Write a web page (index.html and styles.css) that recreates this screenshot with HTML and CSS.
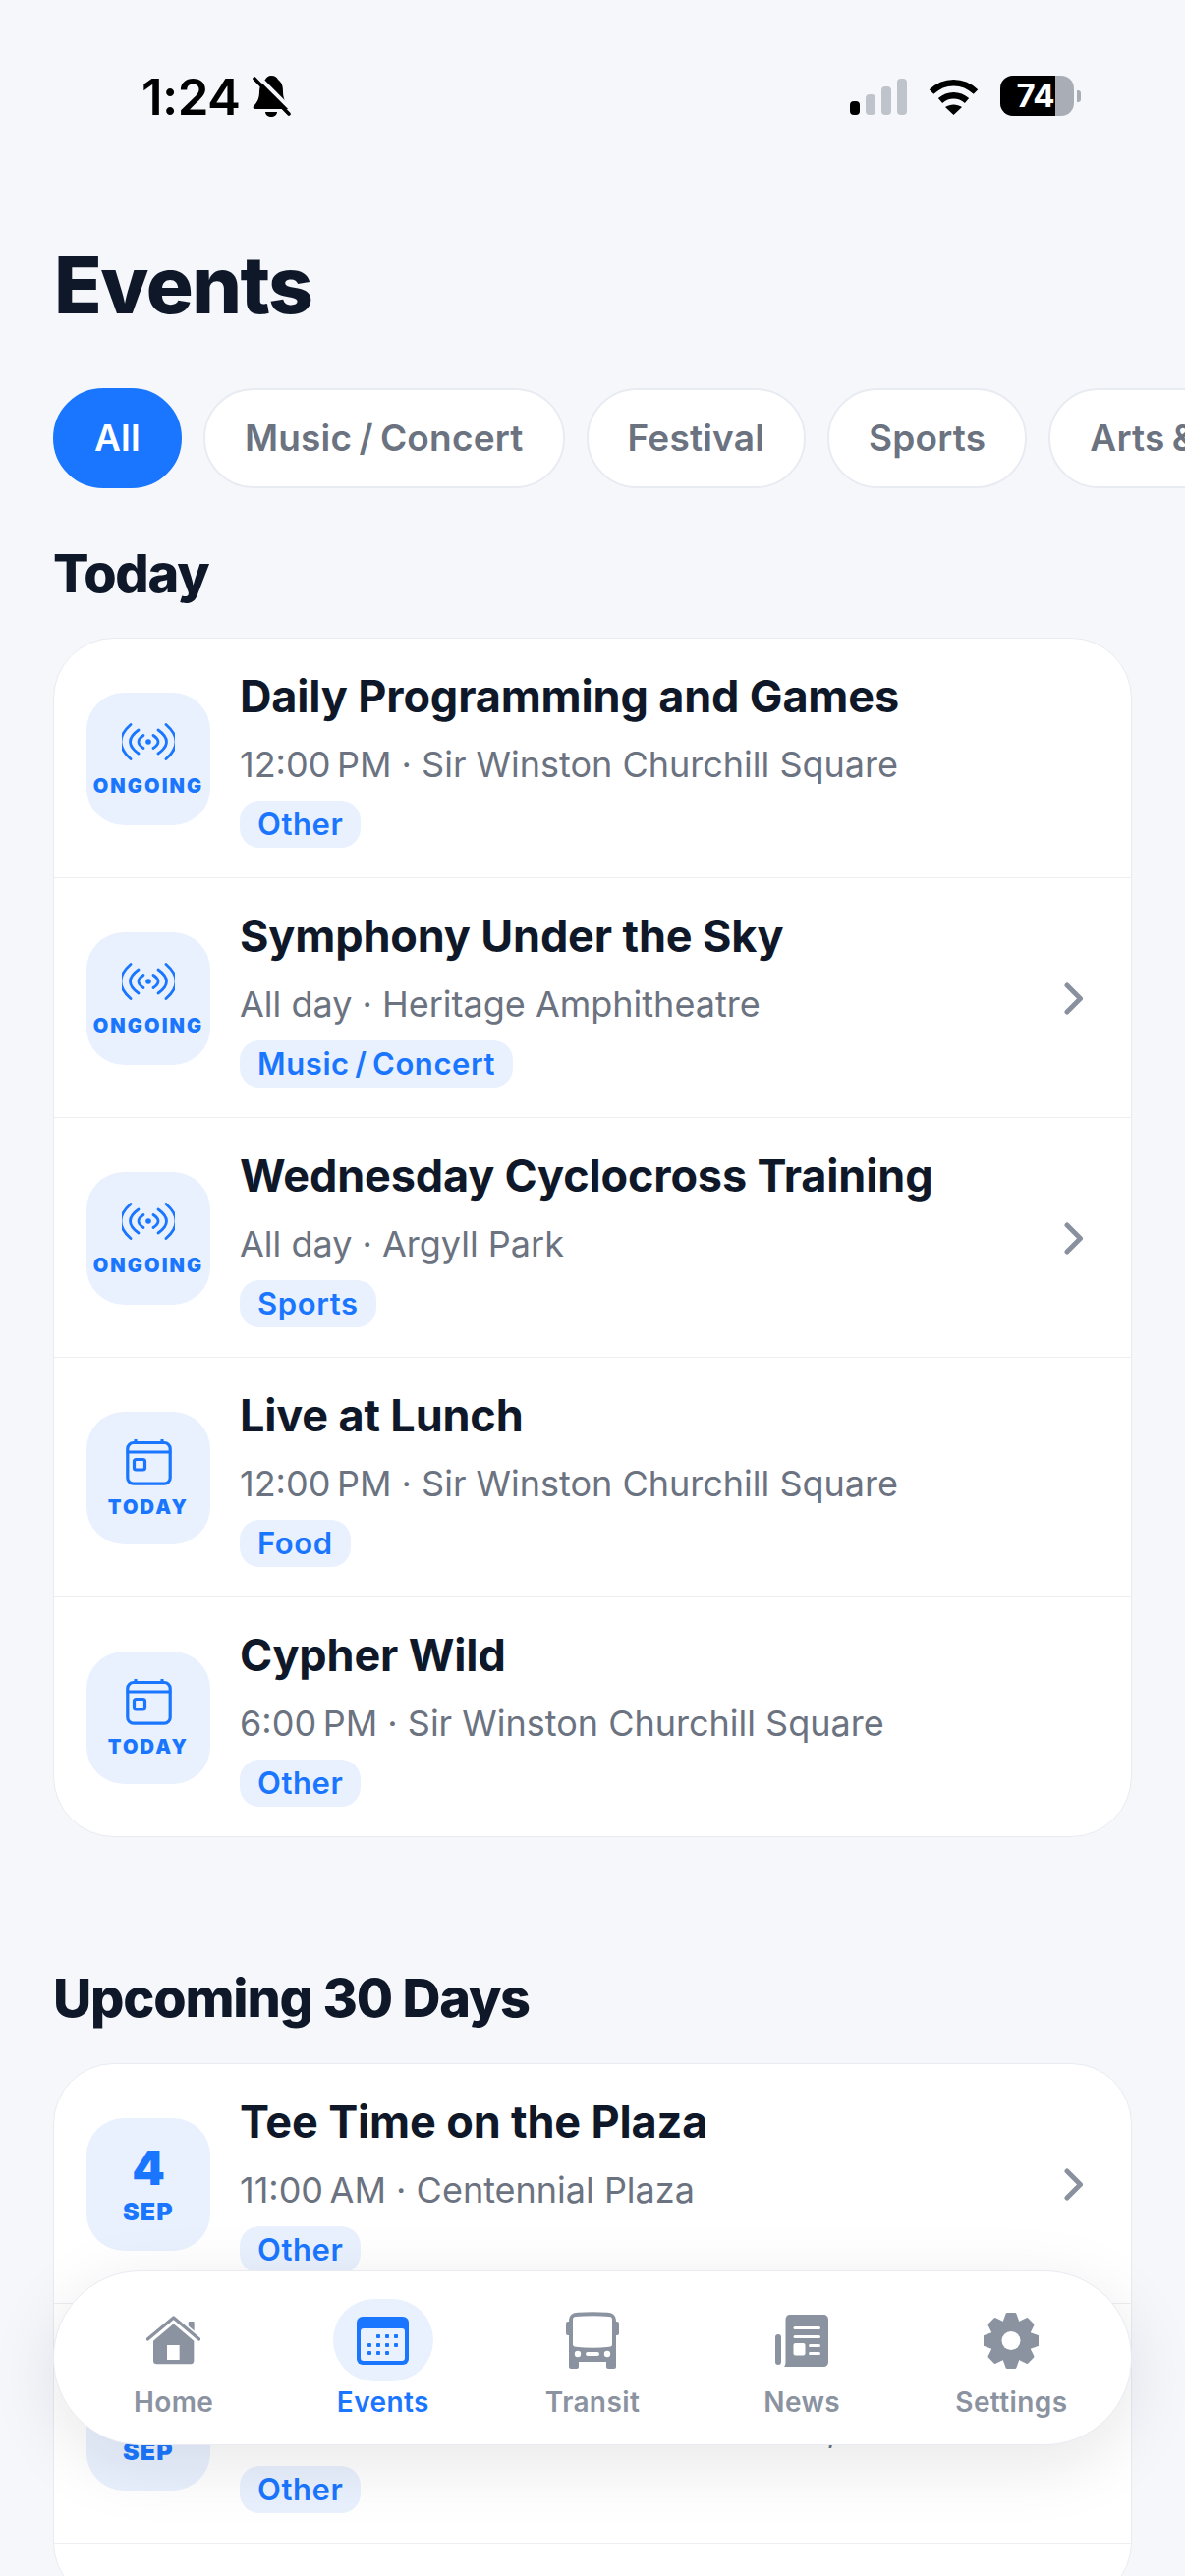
FILE: index.html
```html
<!DOCTYPE html>
<html lang="en">
<head>
    <meta charset="UTF-8">
    <meta name="viewport" content="width=device-width, initial-scale=1.0">
    <title>Events</title>
    <link rel="stylesheet" href="styles.css">
</head>
<body>
    <svg class="defs">
        <defs>
            <g id="ic-live" fill="none" stroke="#1a76ff" stroke-width="2.8" stroke-linecap="round">
                <circle cx="27" cy="19" r="2.8" fill="#1a76ff" stroke="none"/>
                <path d="M22 12.5Q12 19 22 25.5M32 12.5Q42 19 32 25.5"/>
                <path d="M17 7Q0 19 17 31M37 7Q54 19 37 31"/>
                <path d="M9 1.5Q-11 19 9 36.5M45 1.5Q65 19 45 36.5"/>
            </g>
            <g id="ic-cal" fill="none" stroke="#1a76ff" stroke-width="3.2" stroke-linecap="round">
                <rect x="1.8" y="3.5" width="43.4" height="41.7" rx="6"/>
                <path d="M2 13H45M10 1V3M37 1V3"/>
                <rect x="8.5" y="20.5" width="11" height="10.5" rx="2"/>
            </g>
            <path id="ic-chev" d="M3 3L16.500 16.500L3 30" fill="none" stroke="#8a919e" stroke-width="5" stroke-linecap="round" stroke-linejoin="round"/>
            <path id="tooth" d="M-6.500 -20L-4 -27H4L6.500 -20Z" stroke="#8b92a0" stroke-width="3" stroke-linejoin="round" fill="#8b92a0"/>
        </defs>
    </svg>

    <div class="status-bar">
        <div class="status-left">
            <span class="clock">1:24</span>
            <svg class="bell" width="39" height="43" viewBox="0 0 39 43">
                <path d="M19 0C23 0 25 2 26 4C30 7 31 11 31 16C31 23 33 27 37 31C38 33 37 34 35 34H3C1 34 0 33 1 31C5 27 7 23 7 16C7 11 9 7 13 4C14 2 16 0 19 0Z"/>
                <path d="M13 37H25C25 40 22 42 19 42C16 42 13 40 13 37Z"/>
                <path d="M6 1L42 37" stroke="#f5f7fb" stroke-width="4" fill="none"/>
                <path d="M2 3L37 39" stroke="#000" stroke-width="3.600" stroke-linecap="round" fill="none"/>
            </svg>
        </div>
        <div class="status-right">
            <div class="signal">
                <i class="bar on b1"></i><i class="bar b2"></i><i class="bar b3"></i><i class="bar b4"></i>
            </div>
            <svg class="wifi" width="51" height="37" viewBox="0 0 51 37">
                <path d="M3 13.500C16 1 35 1 48 13.500" fill="none" stroke="#000" stroke-width="6.500"/>
                <path d="M12 22.500C20 15.500 31 15.500 39 22.500" fill="none" stroke="#000" stroke-width="6.500"/>
                <path d="M25.500 37L17 29C22 25.500 29 25.500 34 29Z"/>
            </svg>
            <div class="battery">
                <div class="battery-body"><span class="battery-fill">74</span></div>
                <div class="battery-nub"></div>
            </div>
        </div>
    </div>

    <h1>Events</h1>

    <div class="chips">
        <span class="chip active">All</span>
        <span class="chip">Music / Concert</span>
        <span class="chip">Festival</span>
        <span class="chip">Sports</span>
        <span class="chip">Arts &amp; Culture</span>
    </div>

    <h2 class="today-head">Today</h2>
    <div class="card">
        <div class="event">
            <div class="tile">
                <svg class="live-icon" width="54" height="38" viewBox="0 0 54 38"><use href="#ic-live"/></svg>
                <span class="tile-label">ONGOING</span>
            </div>
            <div class="event-text">
                <div class="event-title">Daily Programming and Games</div>
                <div class="event-sub">12:00&#8239;PM · Sir Winston Churchill Square</div>
                <span class="tag">Other</span>
            </div>
        </div>
        <div class="event">
            <div class="tile">
                <svg class="live-icon" width="54" height="38" viewBox="0 0 54 38"><use href="#ic-live"/></svg>
                <span class="tile-label">ONGOING</span>
            </div>
            <div class="event-text">
                <div class="event-title">Symphony Under the Sky</div>
                <div class="event-sub">All day · Heritage Amphitheatre</div>
                <span class="tag">Music / Concert</span>
            </div>
            <svg class="chevron" width="20" height="33" viewBox="0 0 20 33"><use href="#ic-chev"/></svg>
        </div>
        <div class="event">
            <div class="tile">
                <svg class="live-icon" width="54" height="38" viewBox="0 0 54 38"><use href="#ic-live"/></svg>
                <span class="tile-label">ONGOING</span>
            </div>
            <div class="event-text">
                <div class="event-title">Wednesday Cyclocross Training</div>
                <div class="event-sub">All day · Argyll Park</div>
                <span class="tag">Sports</span>
            </div>
            <svg class="chevron" width="20" height="33" viewBox="0 0 20 33"><use href="#ic-chev"/></svg>
        </div>
        <div class="event">
            <div class="tile">
                <svg class="cal-icon" width="47" height="47" viewBox="0 0 47 47"><use href="#ic-cal"/></svg>
                <span class="tile-label">TODAY</span>
            </div>
            <div class="event-text">
                <div class="event-title">Live at Lunch</div>
                <div class="event-sub">12:00&#8239;PM · Sir Winston Churchill Square</div>
                <span class="tag">Food</span>
            </div>
        </div>
        <div class="event">
            <div class="tile">
                <svg class="cal-icon" width="47" height="47" viewBox="0 0 47 47"><use href="#ic-cal"/></svg>
                <span class="tile-label">TODAY</span>
            </div>
            <div class="event-text">
                <div class="event-title">Cypher Wild</div>
                <div class="event-sub">6:00&#8239;PM · Sir Winston Churchill Square</div>
                <span class="tag">Other</span>
            </div>
        </div>
    </div>

    <h2 class="upcoming-head">Upcoming 30 Days</h2>
    <div class="card card-open">
        <div class="event">
            <div class="tile">
                <span class="tile-day">4</span>
                <span class="tile-month">SEP</span>
            </div>
            <div class="event-text">
                <div class="event-title">Tee Time on the Plaza</div>
                <div class="event-sub">11:00&#8239;AM · Centennial Plaza</div>
                <span class="tag">Other</span>
            </div>
            <svg class="chevron" width="20" height="33" viewBox="0 0 20 33"><use href="#ic-chev"/></svg>
        </div>
        <div class="event">
            <div class="tile">
                <span class="tile-day">5</span>
                <span class="tile-month">SEP</span>
            </div>
            <div class="event-text">
                <div class="event-title">Tee Time on the Plaza</div>
                <div class="event-sub">11:00&#8239;AM · Centennial Plaza Garden, Downtown</div>
                <span class="tag">Other</span>
            </div>
        </div>
    </div>

    <nav class="tabbar">
        <div class="tab">
            <div class="tab-icon">
                <svg width="55" height="50" viewBox="0 0 165 150" fill="#8b92a0">
                    <rect x="128" y="18" width="18" height="36" rx="3"/>
                    <path d="M83 25L145 77V138C145 144 141 148 135 148H31C25 148 21 144 21 138V77Z"/>
                    <rect x="63" y="90" width="38" height="45" fill="#fff"/>
                    <path d="M4 72L83 6L161 72" fill="none" stroke="#fff" stroke-width="20"/>
                    <path d="M4 72L83 6L161 72" fill="none" stroke="#8b92a0" stroke-width="10" stroke-linecap="round" stroke-linejoin="round"/>
                </svg>
            </div>
            <span class="tab-label">Home</span>
        </div>
        <div class="tab active">
            <div class="tab-icon">
                <svg width="53" height="49" viewBox="0 0 53 49">
                    <rect width="53" height="49" rx="6" fill="#1a76ff"/>
                    <rect x="4" y="12" width="45" height="33" rx="3" fill="#e9f1fe"/>
                    <g fill="#1a76ff">
                        <rect x="20" y="18" width="4" height="4" rx="1"/><rect x="29" y="18" width="4" height="4" rx="1"/><rect x="38" y="18" width="4" height="4" rx="1"/>
                        <rect x="11" y="27" width="4" height="4" rx="1"/><rect x="20" y="27" width="4" height="4" rx="1"/><rect x="29" y="27" width="4" height="4" rx="1"/><rect x="38" y="27" width="4" height="4" rx="1"/>
                        <rect x="11" y="35" width="4" height="4" rx="1"/><rect x="20" y="35" width="4" height="4" rx="1"/><rect x="29" y="35" width="4" height="4" rx="1"/>
                    </g>
                </svg>
            </div>
            <span class="tab-label">Events</span>
        </div>
        <div class="tab">
            <div class="tab-icon">
                <svg width="54" height="58" viewBox="0 0 54 58" fill="#8b92a0">
                    <path d="M3 10C3 3 7 1 12 .8C22 0 32 0 42 .8C47 1 51 3 51 10V51H41V56C41 57 40 58 39 58H15V58C14 58 13 57 13 56V51H3Z"/>
                    <path d="M3 50H13V56C13 57 12 58 11 58H5C4 58 3 57 3 56Z"/>
                    <path d="M41 50H51V56C51 57 50 58 49 58H43C42 58 41 57 41 56Z"/>
                    <rect x="0" y="10" width="5" height="14" rx="2"/>
                    <rect x="49" y="10" width="5" height="14" rx="2"/>
                    <rect x="13" y="51" width="28" height="7" fill="#fff"/>
                    <path d="M7 8C7 6 8 5 10 5C21 4 33 4 44 5C46 5 47 6 47 8V33C47 35 46 35.500 44 35.800C33 37 21 37 10 35.800C8 35.500 7 35 7 33Z" fill="#fff"/>
                    <circle cx="12" cy="43" r="3.200" fill="#fff"/>
                    <circle cx="42" cy="43" r="3.200" fill="#fff"/>
                    <rect x="20" y="41" width="14" height="4" rx="2" fill="#fff"/>
                </svg>
            </div>
            <span class="tab-label">Transit</span>
        </div>
        <div class="tab">
            <div class="tab-icon">
                <svg width="54" height="53" viewBox="0 0 54 53" fill="#8b92a0">
                    <rect x="0" y="20" width="6" height="31" rx="3"/>
                    <path d="M15 0H49C52 0 54 2 54 5V48C54 51 52 53 49 53H9C10 52 10.500 50 10.500 48V5C10.500 2 12 0 15 0Z"/>
                    <g fill="#fff">
                        <rect x="18.500" y="12" width="27.500" height="3" rx="1.500"/>
                        <rect x="18.500" y="21" width="27.500" height="3" rx="1.500"/>
                        <rect x="18.500" y="29" width="12" height="12.500" rx="2"/>
                        <rect x="34" y="30" width="12" height="3" rx="1.500"/>
                        <rect x="34" y="38" width="12" height="3" rx="1.500"/>
                    </g>
                </svg>
            </div>
            <span class="tab-label">News</span>
        </div>
        <div class="tab">
            <div class="tab-icon">
                <svg width="56" height="57" viewBox="-28 -28.500 56 57">
                    <circle r="21.500" fill="#8b92a0"/>
                    <use href="#tooth"/>
                    <use href="#tooth" transform="rotate(45)"/>
                    <use href="#tooth" transform="rotate(90)"/>
                    <use href="#tooth" transform="rotate(135)"/>
                    <use href="#tooth" transform="rotate(180)"/>
                    <use href="#tooth" transform="rotate(225)"/>
                    <use href="#tooth" transform="rotate(270)"/>
                    <use href="#tooth" transform="rotate(315)"/>
                    <circle r="9.500" fill="#fff"/>
                </svg>
            </div>
            <span class="tab-label">Settings</span>
        </div>
    </nav>
</body>
</html>
```

FILE: styles.css
```css
* { box-sizing: border-box; }
html, body { margin: 0; height: 2622px; overflow: hidden; }
body { position: relative; background: #f5f7fb; font-family: Inter, "Liberation Sans", sans-serif; color: #0f1829; }
.defs { width: 0; height: 0; display: block; }

.status-bar { display: flex; justify-content: space-between; align-items: flex-start; height: 120px; padding: 77px 106px 0 144px; }
.status-left { display: flex; align-items: center; gap: 13px; height: 43px; }
.clock { font-size: 51px; font-weight: 600; letter-spacing: -.6px; line-height: 43px; color: #000; }
.status-right { display: flex; align-items: center; height: 41px; }
.signal { display: flex; align-items: flex-end; gap: 6px; height: 37px; margin-right: 22px; margin-top: 2px; }
.bar { display: block; width: 10px; border-radius: 4px; background: #bfc3cb; }
.bar.on { background: #000; }
.b1 { height: 14px; }
.b2 { height: 21px; }
.b3 { height: 29px; }
.b4 { height: 37px; }
.wifi { margin-right: 22px; margin-top: 2px; }
.battery { display: flex; align-items: center; gap: 3px; }
.battery-body { width: 75px; height: 41px; border-radius: 13px; background: #a9adb5; overflow: hidden; }
.battery-fill { display: block; width: 56px; height: 41px; background: #000; color: #fff; font-size: 33px; font-weight: 700; line-height: 41px; text-align: right; padding-right: 1px; letter-spacing: -.5px; }
.battery-nub { width: 4px; height: 12px; border-radius: 0 3px 3px 0; background: #a9adb5; }

h1 { margin: 122px 0 0 55px; font-size: 80px; line-height: 96px; font-weight: 800; letter-spacing: -1.500px; }

.chips { display: flex; gap: 22px; margin: 57px 0 0 54px; }
.chip { flex-shrink: 0; height: 102px; padding: 0 40px; border: 2px solid #e9ebf2; border-radius: 51px; background: #fff; font-size: 37px; font-weight: 600; line-height: 98px; letter-spacing: .2px; word-spacing: -2.300px; color: #6b7280; white-space: nowrap; }
.chip.active { background: #1a76ff; border-color: #1a76ff; color: #fff; }

h2 { margin: 0 0 0 54px; font-size: 54px; line-height: 64px; font-weight: 800; letter-spacing: -1.200px; }
.today-head { margin-top: 55px; margin-bottom: 33px; }
.upcoming-head { margin-top: 132px; margin-bottom: 34px; }

.card { margin: 0 54px; border: 1px solid #e8ebf1; border-radius: 62px; background: #fff; overflow: hidden; }
.card-open { padding-bottom: 60px; }
.event { display: flex; align-items: center; gap: 30px; padding: 31px 48px 30px 33px; border-bottom: 1px solid #edeef2; }
.card > .event:last-child { border-bottom: 0; }
.card-open > .event:last-child { border-bottom: 1px solid #edeef2; }
.tile { flex-shrink: 0; display: flex; flex-direction: column; align-items: center; justify-content: center; width: 126px; height: 135px; border-radius: 38px; background: #e9f1fe; color: #1a76ff; }
.live-icon { margin-top: 3px; margin-bottom: 7px; }
.cal-icon { margin-top: 2px; margin-bottom: 3px; }
.tile-label { margin-top: 8px; font-size: 20px; line-height: 22px; font-weight: 900; letter-spacing: 2.100px; }
.tile-day { font-size: 48px; line-height: 50px; font-weight: 900; }
.tile-month { margin-top: 5px; font-size: 25px; line-height: 28px; font-weight: 900; letter-spacing: 1.200px; }
.event-text { flex: 1; min-width: 0; display: flex; flex-direction: column; align-items: flex-start; }
.event-title { font-size: 45px; line-height: 56px; font-weight: 650; letter-spacing: -.15px; white-space: nowrap; }
.event-sub { margin-top: 18px; font-size: 36px; line-height: 46px; color: #6b7280; white-space: nowrap; }
.tag { margin-top: 14px; height: 48px; padding: 0 18px; border-radius: 20px; background: #e9f1fe; color: #1a76ff; font-size: 31px; line-height: 48px; font-weight: 600; letter-spacing: .6px; word-spacing: -3px; }
.chevron { flex-shrink: 0; }

.tabbar { position: absolute; left: 54px; right: 54px; bottom: 133px; display: flex; height: 178px; padding: 0 15px; border: 1px solid #e8ebf1; border-radius: 89px; background: #fff; box-shadow: 0 18px 70px rgba(15, 24, 41, .1); }
.tab { flex: 1; display: flex; flex-direction: column; align-items: center; padding-top: 28px; color: #8b92a0; }
.tab-icon { display: flex; align-items: center; justify-content: center; width: 102px; height: 84px; border-radius: 42px; }
.tab.active { color: #1a76ff; }
.tab.active .tab-icon { background: #e9f1fe; }
.tab-label { margin-top: 5px; font-size: 28px; line-height: 32px; font-weight: 600; letter-spacing: .4px; }
```
